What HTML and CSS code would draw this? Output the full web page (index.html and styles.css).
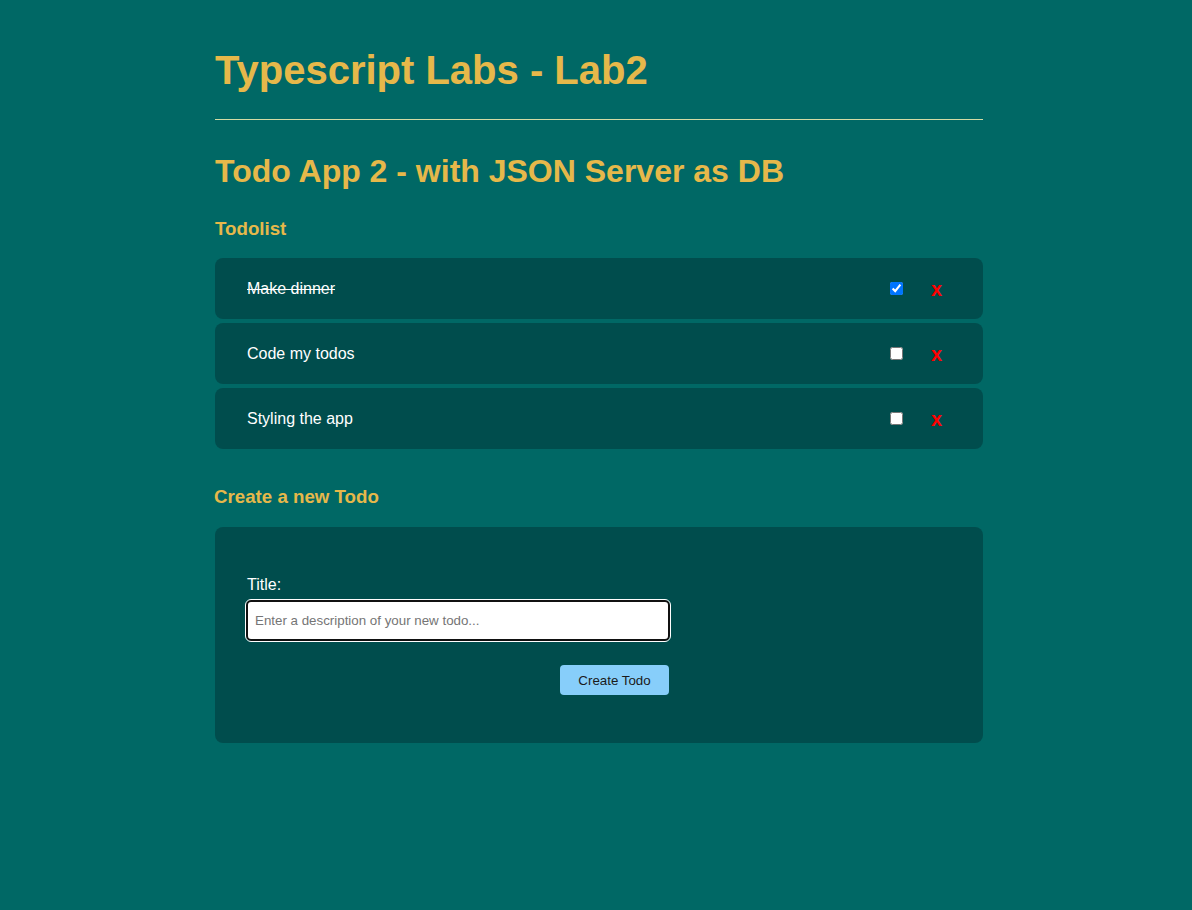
FILE: index.html
```html
<!DOCTYPE html>
<html>
<head>
<meta charset="utf-8">
<title>Typescript Labs - Lab2</title>
<link rel="stylesheet" href="styles.css">
</head>
<body>
<main class="page">
  <h1 class="title">Typescript Labs - Lab2</h1>
  <hr class="rule">
  <h2 class="subtitle">Todo App 2 - with JSON Server as DB</h2>
  <h3 class="section section-list">Todolist</h3>
  <ul class="todos">
    <li class="todo">
      <span class="todo-text done">Make dinner</span>
      <input type="checkbox" class="todo-check" checked>
      <span class="todo-del">x</span>
    </li>
    <li class="todo">
      <span class="todo-text">Code my todos</span>
      <input type="checkbox" class="todo-check">
      <span class="todo-del">x</span>
    </li>
    <li class="todo">
      <span class="todo-text">Styling the app</span>
      <input type="checkbox" class="todo-check">
      <span class="todo-del">x</span>
    </li>
  </ul>
  <h3 class="section section-create">Create a new Todo</h3>
  <form class="create">
    <label class="create-label" for="title">Title:</label>
    <input id="title" class="create-input" type="text" placeholder="Enter a description of your new todo...">
    <div class="create-actions">
      <button type="button" class="create-btn">Create Todo</button>
    </div>
  </form>
</main>
</body>
</html>
```

FILE: styles.css
```css
html, body {
  margin: 0;
  padding: 0;
}
body {
  background: #006865;
  font-family: "Liberation Sans", Arial, sans-serif;
  color: #ffffff;
  min-height: 910px;
}
.page {
  width: 768px;
  margin-left: 215px;
  padding-top: 47px;
}
.title {
  margin: 0;
  font-size: 40px;
  line-height: 46px;
  color: #e6b84a;
  font-weight: bold;
}
.rule {
  margin: 26px 0 0 0;
  border: 0;
  border-top: 1px solid #d3dba4;
  height: 0;
}
.subtitle {
  margin: 33px 0 0 0;
  font-size: 32px;
  line-height: 37px;
  color: #e6b84a;
}
.section {
  margin: 18px 0 0 0;
  font-size: 18.72px;
  line-height: 22px;
  color: #e6b84a;
}
.section-list {
  margin-top: 28px;
}
.todos {
  list-style: none;
  margin: 18px 0 0 0;
  padding: 0;
  display: flex;
  flex-direction: column;
  gap: 4px;
}
.todo {
  display: flex;
  align-items: center;
  height: 61px;
  padding: 0 41px 0 32px;
  background: #004d4d;
  border-radius: 8px;
  font-size: 16px;
}
.todo-text {
  flex: 1;
}
.todo-text.done {
  text-decoration: line-through;
}
.todo-check {
  margin: 0;
  width: 13px;
  height: 13px;
}
.todo-del {
  margin-left: 28px;
  color: #ff0000;
  font-weight: bold;
  font-size: 20px;
  line-height: 20px;
}
.section-create {
  margin-top: 37px;
  margin-left: -1px;
}
.create {
  margin-top: 19px;
  background: #004d4d;
  border-radius: 8px;
  padding: 49px 32px 0 32px;
  display: flex;
  flex-direction: column;
  align-items: flex-start;
  height: 216px;
  box-sizing: border-box;
}
.create-label {
  font-size: 16px;
  line-height: 18px;
}
.create-input {
  margin-top: 6px;
  margin-left: -1px;
  width: 424px;
  height: 41px;
  box-sizing: border-box;
  border: 2px solid #111;
  border-radius: 5px;
  outline: 1px solid #ffffff;
  outline-offset: 0;
  padding: 0 7px;
  font-family: "Liberation Sans", Arial, sans-serif;
  font-size: 13.33px;
  background: #fff;
}
.create-input::placeholder {
  color: #757575;
}
.create-actions {
  width: 422px;
  display: flex;
  justify-content: flex-end;
  margin-top: 24px;
}
.create-btn {
  width: 109px;
  height: 30px;
  border: 0;
  border-radius: 4px;
  background: #87cefa;
  color: #1a1a1a;
  font-family: "Liberation Sans", Arial, sans-serif;
  font-size: 13.33px;
  padding: 0;
}
```
